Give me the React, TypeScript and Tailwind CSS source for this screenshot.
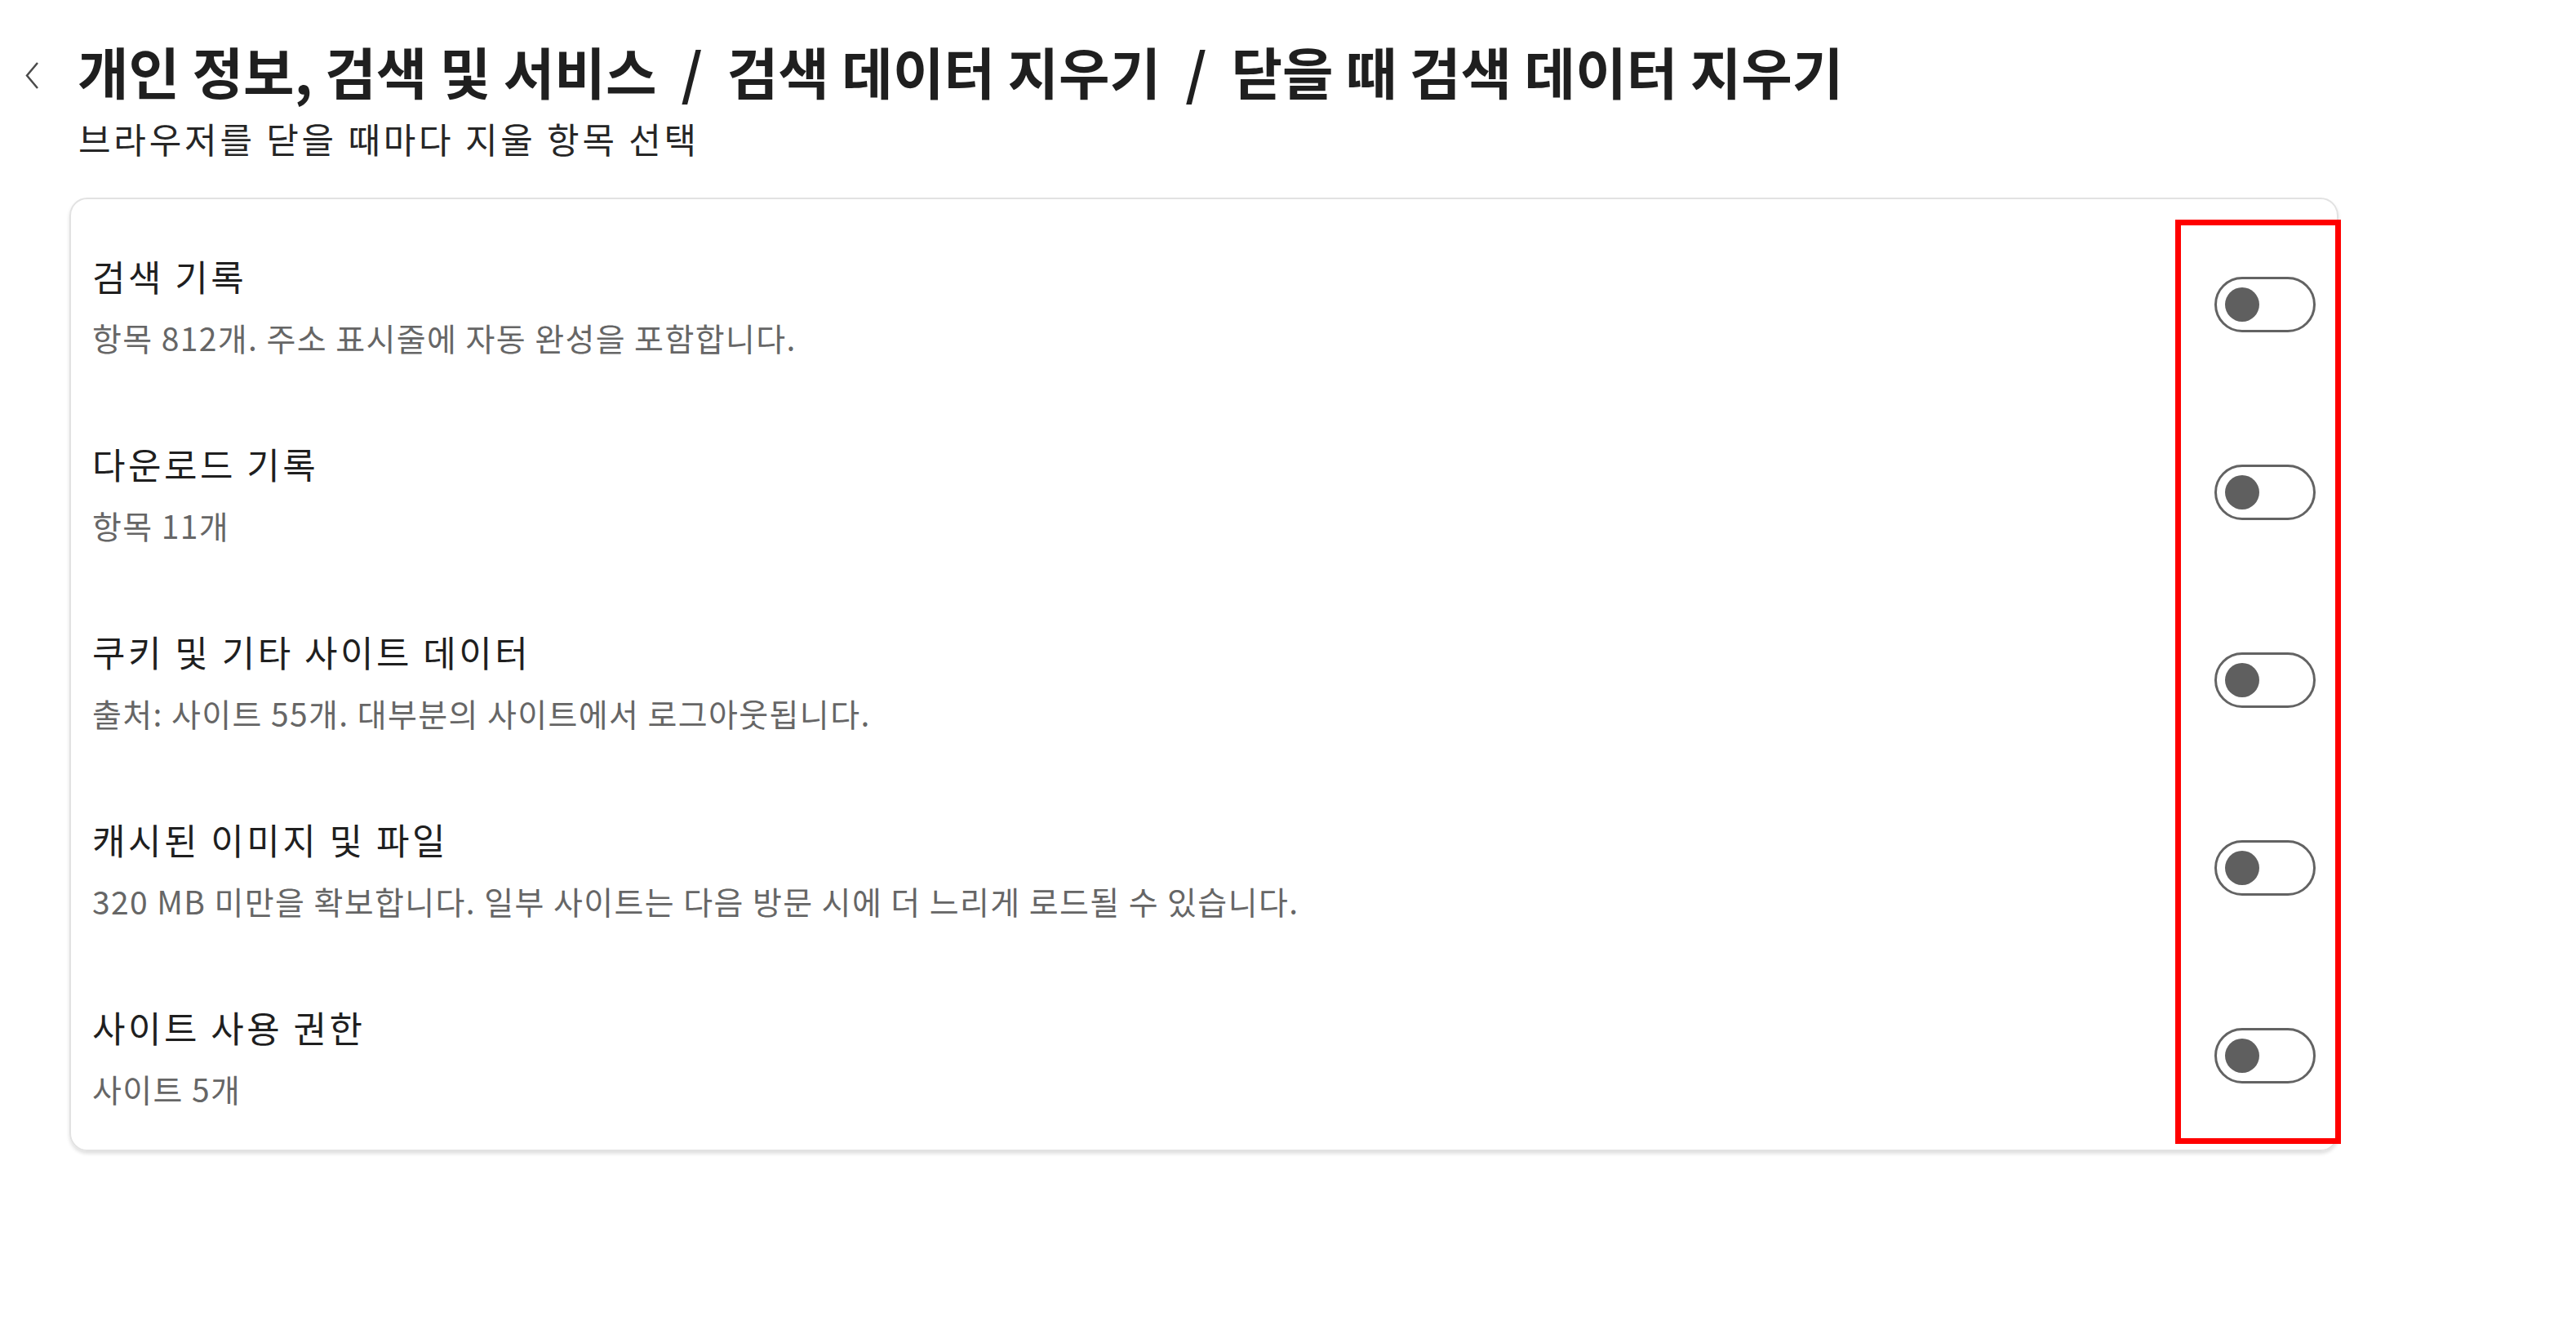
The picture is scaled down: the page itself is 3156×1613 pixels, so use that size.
const ITEMS = [
  { title: "검색 기록", desc: "항목 812개. 주소 표시줄에 자동 완성을 포함합니다." },
  { title: "다운로드 기록", desc: "항목 11개" },
  { title: "쿠키 및 기타 사이트 데이터", desc: "출처: 사이트 55개. 대부분의 사이트에서 로그아웃됩니다." },
  {
    title: "캐시된 이미지 및 파일",
    desc: "320 MB 미만을 확보합니다. 일부 사이트는 다음 방문 시에 더 느리게 로드될 수 있습니다.",
  },
  { title: "사이트 사용 권한", desc: "사이트 5개" },
];

const CRUMBS = ["개인 정보, 검색 및 서비스", "검색 데이터 지우기", "닫을 때 검색 데이터 지우기"];

function Toggle() {
  return (
    <div className="flex h-[68px] w-[124px] shrink-0 items-center rounded-full border-[3px] border-[#636363] bg-white pl-[10px]">
      <div className="h-[42px] w-[42px] rounded-full bg-[#5f5f5f]" />
    </div>
  );
}

export default function App() {
  return (
    <div
      className="min-h-screen bg-white text-[#1f1f1f]"
      style={{ fontFamily: '"Noto Sans CJK KR", "Noto Sans", sans-serif' }}
    >
      <div className="flex items-center pl-[30px] pt-[50px]">
        <svg width="18" height="35" viewBox="0 0 18 35" className="mt-[10px] shrink-0">
          <path d="M16 2 L3 17.5 L16 33" fill="none" stroke="#4a4a4a" strokeWidth="2.5" />
        </svg>
        <h1 className="ml-[47px] flex text-[68px] font-bold leading-[74px] whitespace-nowrap">
          {CRUMBS.map((c, i) => (
            <span key={c} className="flex">
              {i > 0 && <span className="mx-[30px]">/</span>}
              <span>{c}</span>
            </span>
          ))}
        </h1>
      </div>
      <p className="ml-[96px] mt-[22px] text-[43px] leading-[46px] tracking-[3.8px] text-[#262626]">
        브라우저를 닫을 때마다 지울 항목 선택
      </p>

      <div className="relative ml-[85px] mt-[50px] w-[2780px] rounded-[22px] border-2 border-[#e2e2e2] pl-[26px] pr-[26px] pt-[14px] shadow-[0_3px_4px_rgba(0,0,0,0.13)]">
        {ITEMS.map((item) => (
          <div key={item.title} className="flex h-[230px] items-center justify-between">
            <div className="flex flex-col">
              <span className="text-[44px] leading-[54px] tracking-[3.5px] text-[#1f1f1f]">{item.title}</span>
              <span className="mt-[25px] text-[39px] leading-[46px] tracking-[1.4px] text-[#666666]">
                {item.desc}
              </span>
            </div>
            <Toggle />
          </div>
        ))}
        <div className="absolute left-[2578px] top-[25px] h-[1132px] w-[203px] border-[7px] border-[#ff0000]" />
      </div>
    </div>
  );
}
